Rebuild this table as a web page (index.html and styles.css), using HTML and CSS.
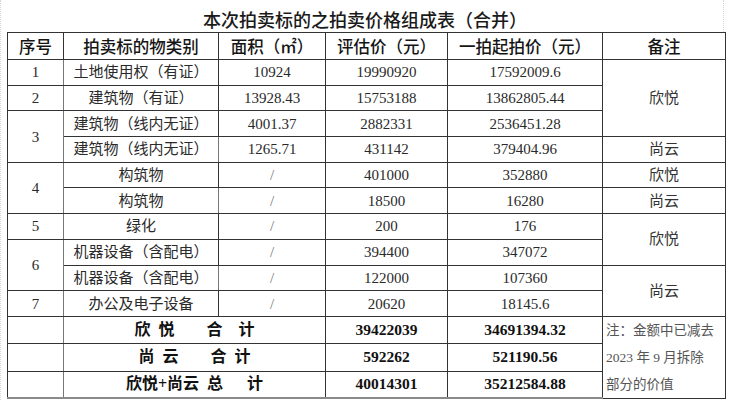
FILE: index.html
```html
<!DOCTYPE html>
<html lang="zh-CN">
<head>
<meta charset="utf-8">
<title>本次拍卖标的之拍卖价格组成表（合并）</title>
<link rel="stylesheet" href="styles.css">
</head>
<body>
<div class="sheet">
  <h1 class="title">本次拍卖标的之拍卖价格组成表（合并）</h1>
  <table class="grid">
    <colgroup>
      <col class="c-no"><col class="c-name"><col class="c-area"><col class="c-eval"><col class="c-start"><col class="c-note">
    </colgroup>
    <thead>
      <tr class="head">
        <th>序号</th><th>拍卖标的物类别</th><th>面积（㎡）</th><th>评估价（元）</th><th>一拍起拍价（元）</th><th>备注</th>
      </tr>
    </thead>
    <tbody>
      <tr><td>1</td><td>土地使用权（有证）</td><td class="num">10924</td><td class="num">19990920</td><td class="num">17592009.6</td><td class="owner" rowspan="3">欣悦</td></tr>
      <tr><td>2</td><td>建筑物（有证）</td><td class="num">13928.43</td><td class="num">15753188</td><td class="num">13862805.44</td></tr>
      <tr><td rowspan="2">3</td><td>建筑物（线内无证）</td><td class="num">4001.37</td><td class="num">2882331</td><td class="num">2536451.28</td></tr>
      <tr><td>建筑物（线内无证）</td><td class="num">1265.71</td><td class="num">431142</td><td class="num">379404.96</td><td class="owner">尚云</td></tr>
      <tr><td rowspan="2">4</td><td>构筑物</td><td class="slash">/</td><td class="num">401000</td><td class="num">352880</td><td class="owner">欣悦</td></tr>
      <tr><td>构筑物</td><td class="slash">/</td><td class="num">18500</td><td class="num">16280</td><td class="owner">尚云</td></tr>
      <tr><td>5</td><td>绿化</td><td class="slash">/</td><td class="num">200</td><td class="num">176</td><td class="owner" rowspan="2">欣悦</td></tr>
      <tr><td rowspan="2">6</td><td>机器设备（含配电）</td><td class="slash">/</td><td class="num">394400</td><td class="num">347072</td></tr>
      <tr><td>机器设备（含配电）</td><td class="slash">/</td><td class="num">122000</td><td class="num">107360</td><td class="owner" rowspan="2">尚云</td></tr>
      <tr><td>7</td><td>办公及电子设备</td><td class="slash">/</td><td class="num">20620</td><td class="num">18145.6</td></tr>
      <tr class="total"><td></td><td colspan="2" class="label">欣&ensp;悦&emsp;&emsp;合&emsp;计</td><td class="num">39422039</td><td class="num">34691394.32</td>
        <td class="remark" rowspan="3">注：金额中已减去<br>2023 年 9 月拆除<br>部分的价值</td></tr>
      <tr class="total"><td></td><td colspan="2" class="label">尚&ensp;云&emsp;&emsp;合&ensp;计</td><td class="num">592262</td><td class="num">521190.56</td></tr>
      <tr class="total last"><td></td><td colspan="2" class="label">欣悦+尚云&ensp;总&emsp;&ensp;计</td><td class="num">40014301</td><td class="num">35212584.88</td></tr>
    </tbody>
  </table>
</div>
</body>
</html>
```

FILE: styles.css
```css
html, body {
  margin: 0;
  padding: 0;
  background: #ffffff;
}

body {
  font-family: "Liberation Serif", "Noto Sans CJK SC", serif;
  color: #2a2a2a;
}

.sheet {
  width: 730px;
  height: 400px;
  box-sizing: border-box;
  padding-left: 7px;
  border-left: 1px dotted #d6d6d6;
}

.title {
  margin: 0 0 0 -1px;
  width: 717px;
  height: 32px;
  box-sizing: border-box;
  padding-top: 10px;
  font-size: 18px;
  line-height: 22px;
  font-weight: 500;
  text-align: center;
  color: #1a1a1a;
  border-right: 1px dotted #d6d6d6;
}

.grid {
  margin-left: -1px;
  border-collapse: collapse;
  table-layout: fixed;
  width: 718px;
  border: 1px solid #2a2a2a;
}

.c-no { width: 56px; }
.c-name { width: 155px; }
.c-area { width: 107px; }
.c-eval { width: 122px; }
.c-start { width: 155px; }
.c-note { width: 123px; }

.grid th,
.grid td {
  border: 1px solid #333333;
  padding: 0;
  text-align: center;
  vertical-align: middle;
  white-space: nowrap;
  overflow: hidden;
}

.grid td:first-child {
  border-right-color: #777777;
}

.head {
  height: 27px;
}

.head th {
  font-size: 16.5px;
  font-weight: 500;
  color: #151515;
}

.grid tbody tr {
  height: 25.7px;
}

.grid td {
  font-size: 15px;
  line-height: 18px;
}

.num {
  font-size: 15.5px;
}

.slash {
  color: #777777;
  font-size: 13px;
}

.owner {
  font-size: 16px;
  color: #333333;
}

.total td {
  font-weight: bold;
  color: #111111;
}

.total .num {
  font-size: 15.5px;
}

.total .label {
  font-size: 16px;
  white-space: pre;
}

.last td {
  border-bottom: 2px solid #8a8a8a;
}

.grid .remark {
  font-weight: normal;
  text-align: left;
  vertical-align: middle;
  padding-left: 3px;
  font-size: 13.5px;
  line-height: 27px;
  color: #555555;
  white-space: normal;
}
```
